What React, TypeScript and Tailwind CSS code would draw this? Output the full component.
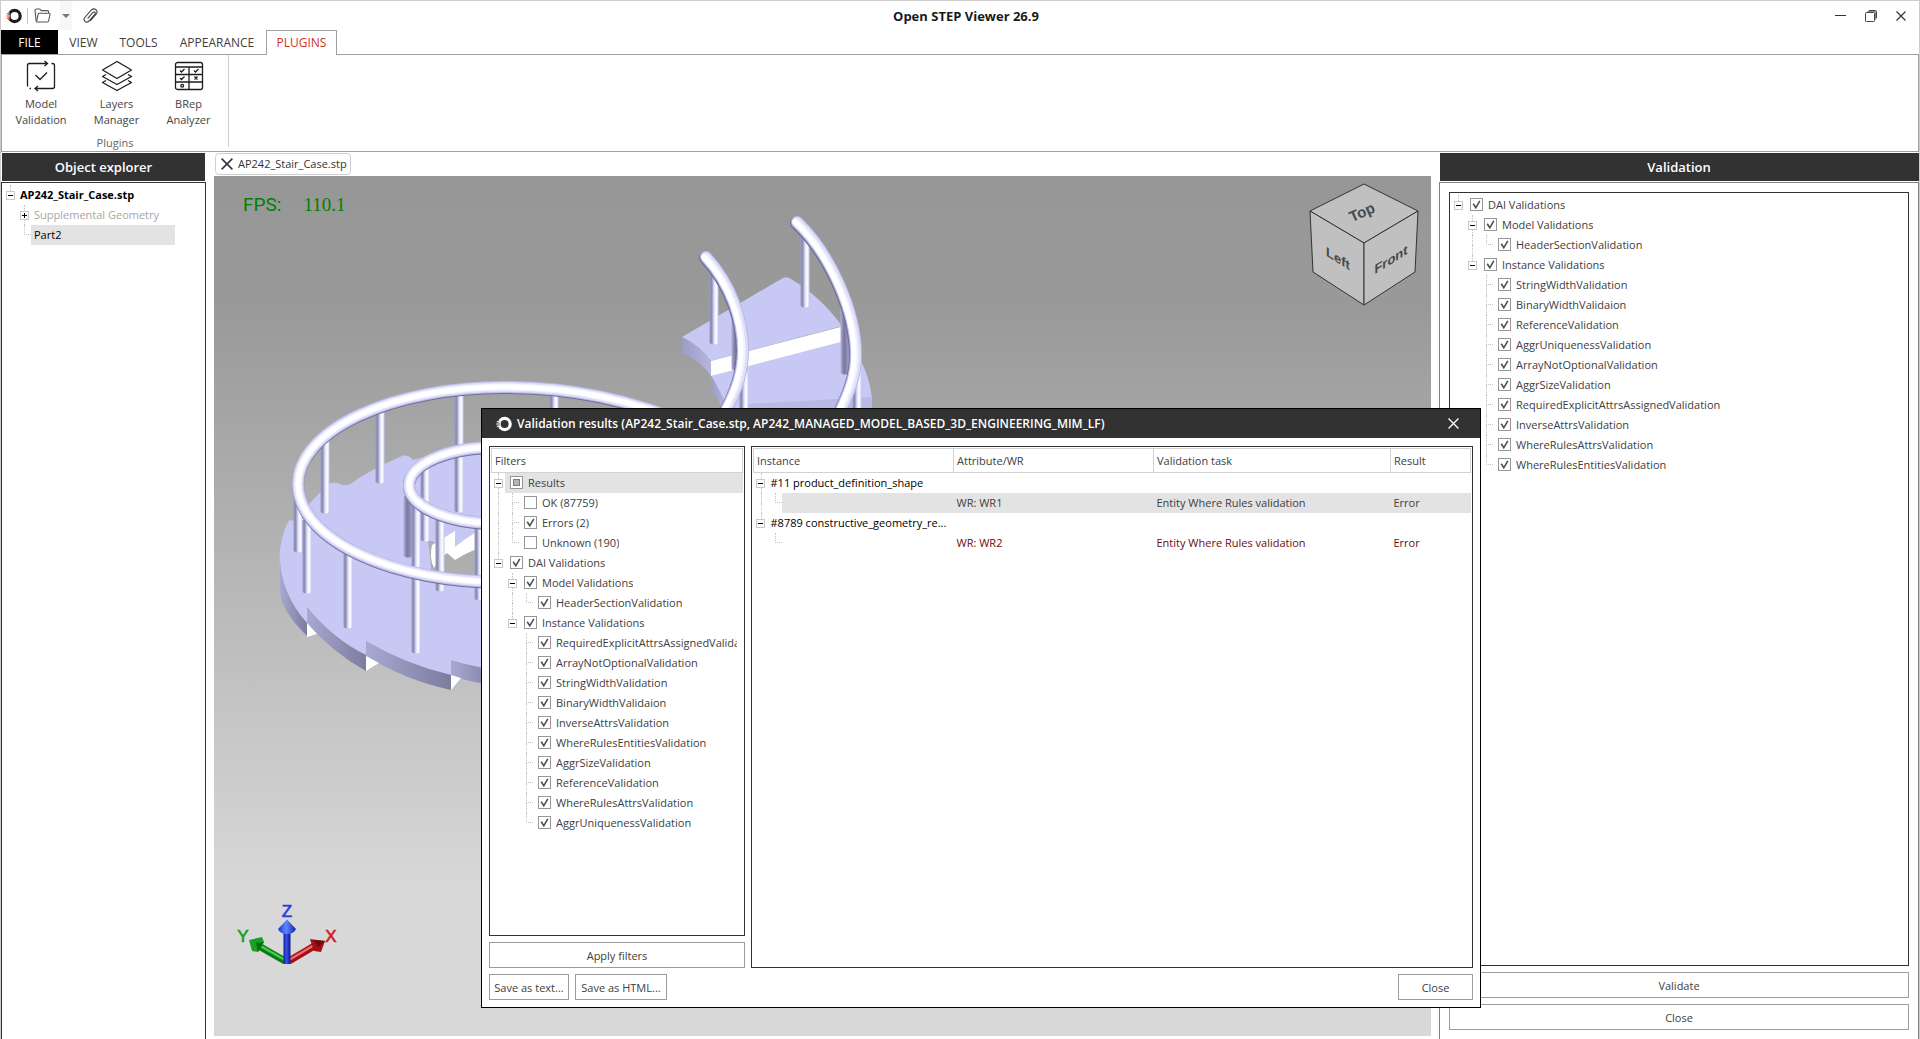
import React, { useId } from "react";

type Check = "on" | "off" | "mixed";
type Guide = "none" | "line" | "tee" | "end" | "both" | "up";

interface TreeNode {
  label: string;
  check?: Check;
  selected?: boolean;
  children?: TreeNode[];
}

const leaf = (label: string): TreeNode => ({ label, check: "on" });

const validationTree: TreeNode[] = [
  {
    label: "DAI Validations",
    check: "on",
    children: [
      { label: "Model Validations", check: "on", children: [leaf("HeaderSectionValidation")] },
      {
        label: "Instance Validations",
        check: "on",
        children: [
          "StringWidthValidation",
          "BinaryWidthValidaion",
          "ReferenceValidation",
          "AggrUniquenessValidation",
          "ArrayNotOptionalValidation",
          "AggrSizeValidation",
          "RequiredExplicitAttrsAssignedValidation",
          "InverseAttrsValidation",
          "WhereRulesAttrsValidation",
          "WhereRulesEntitiesValidation",
        ].map(leaf),
      },
    ],
  },
];

const filterTree: TreeNode[] = [
  {
    label: "Results",
    check: "mixed",
    selected: true,
    children: [
      { label: "OK (87759)", check: "off" },
      { label: "Errors (2)", check: "on" },
      { label: "Unknown (190)", check: "off" },
    ],
  },
  {
    label: "DAI Validations",
    check: "on",
    children: [
      { label: "Model Validations", check: "on", children: [leaf("HeaderSectionValidation")] },
      {
        label: "Instance Validations",
        check: "on",
        children: [
          "RequiredExplicitAttrsAssignedValidation",
          "ArrayNotOptionalValidation",
          "StringWidthValidation",
          "BinaryWidthValidaion",
          "InverseAttrsValidation",
          "WhereRulesEntitiesValidation",
          "AggrSizeValidation",
          "ReferenceValidation",
          "WhereRulesAttrsValidation",
          "AggrUniquenessValidation",
        ].map(leaf),
      },
    ],
  },
];

/* One 14px column of a tree row: dotted guide lines and, for parents, the expander. */
function GuideCell({ kind, expander }: { kind: Guide; expander?: "plus" | "minus" }) {
  const top = kind !== "none";
  const bottom = kind === "line" || kind === "tee" || kind === "both";
  const across = kind === "tee" || kind === "end";
  return (
    <span className="grid h-5 w-[14px] shrink-0 place-items-center">
      <span className="col-start-1 row-start-1 flex h-5 w-[14px] flex-col pl-[7px]">
        <span
          className={`h-[10px] border-dotted border-[#c4c4c4] ${top ? "border-l" : ""} ${across ? "border-b" : ""}`}
        />
        <span className={`h-[10px] border-dotted border-[#c4c4c4] ${bottom ? "border-l" : ""}`} />
      </span>
      {expander && (
        <button
          type="button"
          aria-label={expander === "plus" ? "Expand" : "Collapse"}
          className="col-start-1 row-start-1 grid size-[9px] place-items-center border border-[#c8c8c8] bg-white"
        >
          <span className="col-start-1 row-start-1 h-px w-[5px] bg-black" />
          {expander === "plus" && <span className="col-start-1 row-start-1 h-[5px] w-px bg-black" />}
        </button>
      )}
    </span>
  );
}

function CheckBox({ id, state }: { id: string; state: Check }) {
  return (
    <span className="mb-[2px] grid size-[13px] shrink-0">
      <input
        id={id}
        type="checkbox"
        defaultChecked={state === "on"}
        className="col-start-1 row-start-1 size-[13px] appearance-none border border-[#969696] bg-white"
      />
      {state === "on" && (
        <svg viewBox="0 0 13 13" className="pointer-events-none col-start-1 row-start-1 size-[13px]">
          <path d="M3.200 5.800 5.800 9.800 9.800 2.800" fill="none" stroke="#4f4f4f" strokeWidth="1.600" />
        </svg>
      )}
      {state === "mixed" && (
        <span className="pointer-events-none col-start-1 row-start-1 size-[7px] place-self-center border border-[#7d7d7d] bg-[#b4b4b4]" />
      )}
    </span>
  );
}

function CheckRow({ node, guides, kind }: { node: TreeNode; guides: Guide[]; kind: Guide }) {
  const id = useId();
  return (
    <div className="flex h-5 items-center">
      {guides.map((g, i) => (
        <GuideCell key={i} kind={g} />
      ))}
      <GuideCell kind={kind} expander={node.children ? "minus" : undefined} />
      <div
        className={`flex h-5 min-w-0 flex-1 items-center gap-[5px] pl-[5px] pr-[6px] ${node.selected ? "bg-[#e3e3e3]" : ""}`}
      >
        <CheckBox id={id} state={node.check ?? "off"} />
        <label htmlFor={id} className="overflow-hidden whitespace-nowrap">
          {node.label}
        </label>
      </div>
    </div>
  );
}

function CheckTree({ nodes, guides = [] }: { nodes: TreeNode[]; guides?: Guide[] }) {
  return (
    <>
      {nodes.map((node, i) => {
        const last = i === nodes.length - 1;
        const kind: Guide = node.children ? (last ? "up" : "both") : last ? "end" : "tee";
        return (
          <React.Fragment key={node.label}>
            <CheckRow node={node} guides={guides} kind={kind} />
            {node.children && (
              <CheckTree nodes={node.children} guides={[...guides, last ? "none" : "line"]} />
            )}
          </React.Fragment>
        );
      })}
    </>
  );
}

function Logo({ className, ring, gap, accent }: { className: string; ring: string; gap: string; accent: string }) {
  return (
    <svg viewBox="0 0 16 16" className={className} aria-hidden="true">
      <circle cx="8.600" cy="8" r="5.600" fill="none" stroke={ring} strokeWidth="3.200" />
      <path d="M0 5.700h3.600M0 8h3.600M0 10.300h3.600" stroke={gap} strokeWidth="1.800" />
      <path d="M.8 5.700h3.400M.2 8h4M.8 10.300h3.400" stroke={accent} strokeWidth="1" />
    </svg>
  );
}

function Cross({ className, width = 1.2 }: { className: string; width?: number }) {
  return (
    <svg viewBox="0 0 12 12" className={className} aria-hidden="true">
      <path d="M.6.6 11.4 11.4M11.4.6.6 11.4" stroke="currentColor" strokeWidth={width} fill="none" />
    </svg>
  );
}

function TitleBar() {
  return (
    <header className="flex h-[29px] items-center">
      <div className="flex w-[99px] items-center">
        <Logo className="ml-[5px] size-4" ring="#1d1d1f" gap="#ffffff" accent="#e0452f" />
        <span className="ml-[5px] h-4 w-px bg-[#c9c9c9]" />
        <button type="button" aria-label="Open" className="ml-[6px]">
          <svg viewBox="0 0 17 15" className="h-[15px] w-[17px]" fill="none" stroke="#555" strokeWidth="1.1">
            <path d="M2.2 13.4 1 2.6Q1 1 2.4 1h3.4l1.4 1.6h6.2q1.2 0 1.2 1.2v1.4" />
            <path d="M2.2 14h11.2q1 0 1.2-1L16 6.4q.2-1.2-1-1.2H5.4q-1 0-1.2 1L2.6 13q-.2 1-.4 1z" />
          </svg>
        </button>
        <button
          type="button"
          aria-label="Recent files"
          className="ml-[9px] grid h-[29px] w-3 place-items-center bg-[#f7f7f7]"
        >
          <svg viewBox="0 0 8 4" className="h-1 w-2">
            <path d="M0 0h8L4 4z" fill="#777" />
          </svg>
        </button>
        <button type="button" aria-label="Attach" className="ml-[11px]">
          <svg viewBox="0 0 15 16" className="h-4 w-[15px]" fill="none" stroke="#444" strokeWidth="1.1">
            <path d="M4.6 10.6 10 4.4q1.1-1.1 2 0 .8.9-.2 2L6 13q-1.900 2-4 .4-1.900-1.900-.2-3.900L8.400 2q2.200-2.100 4.500-.3 2.200 2 .4 4.300L7.200 13" />
          </svg>
        </button>
      </div>
      <h1 className="flex-1 text-center text-[13px] font-bold leading-4 text-[#1a1a1a]">Open STEP Viewer 26.9</h1>
      <div className="flex w-[87px] items-center justify-end gap-[19px] pr-[13px] text-[#333]">
        <button type="button" aria-label="Minimize" className="grid h-4 w-[11px] place-items-center">
          <span className="h-px w-[11px] bg-[#333]" />
        </button>
        <button type="button" aria-label="Restore">
          <svg viewBox="0 0 12 12" className="size-3" fill="none" stroke="#444">
            <path d="M2.500 2.500 4 .5h6.500q1 0 1 1V8l-2 1.500" />
            <path d="M2.500 1.500h8v8" stroke="#8a8a8a" />
            <rect x=".5" y="2.500" width="9" height="9" rx=".8" />
          </svg>
        </button>
        <button type="button" aria-label="Close window">
          <Cross className="size-[10px]" width={1.4} />
        </button>
      </div>
    </header>
  );
}

function Tabs() {
  const tab = "h-6 justify-center pt-px leading-6 text-[#404040]";
  return (
    <nav className="flex text-xs">
      <button type="button" className="h-6 w-[57px] bg-black pt-px leading-6 text-white">
        FILE
      </button>
      <button type="button" className={`${tab} w-[51px]`}>VIEW</button>
      <button type="button" className={`${tab} w-[59px]`}>TOOLS</button>
      <button type="button" className={`${tab} w-[98px]`}>APPEARANCE</button>
      <button
        type="button"
        className="relative z-10 -mb-px h-[25px] w-[71px] border border-b-0 border-[#a0a0a0] bg-white leading-6 text-[#d2321e]"
      >
        PLUGINS
      </button>
    </nav>
  );
}

function Ribbon() {
  const btn = "flex flex-col items-center text-center leading-4 text-[#444]";
  return (
    <section className="flex h-[98px] border border-[#a0a0a0]">
      <div className="flex w-[226px] flex-col">
        <div className="flex pt-[5px]">
          <button type="button" className={`${btn} w-[78px]`}>
            <svg viewBox="0 0 30 32" className="mb-1 h-8 w-[30px]" fill="none" stroke="#1e1e1e" strokeWidth="1.300">
              <path d="M1.500 26.500V5.500q0-2 2-2H21M18.500 1l3 2.500-3 2.500M25.500 3.500h1q2 0 2 2v21q0 2-2 2H9.500M12 26l-3 2.500 3 2.500M5 28.500H3.500" />
              <path d="m9.500 15 4.500 4.500 7-7" />
            </svg>
            Model
            <br />
            Validation
          </button>
          <button type="button" className={`${btn} w-[73px]`}>
            <svg
              viewBox="0 0 32 32"
              className="mb-1 size-8"
              fill="none"
              stroke="#1e1e1e"
              strokeWidth="1.300"
              strokeLinejoin="round"
            >
              <path d="M16 1.500 30.500 10 16 18.500 1.500 10z" />
              <path d="M5 14.500 1.500 16.500 16 24.500l14.500-8-3.500-2" />
              <path d="M5 20.500 1.500 22.500 16 30.500l14.500-8-3.500-2" />
            </svg>
            Layers
            <br />
            Manager
          </button>
          <button type="button" className={`${btn} w-[71px]`}>
            <svg viewBox="0 0 30 32" className="mb-1 h-8 w-[30px]" fill="none" stroke="#1e1e1e" strokeWidth="1.300">
              <rect x="1.500" y="2.500" width="27" height="27" rx="2" />
              <path d="M1.500 7h27M1.500 14.500h27M1.500 22h27M15 7v22.500" />
              <path d="m6 10.500 1.500 1.500L10.500 9M20 10.500l1.500 1.500L24.500 9M6 18l1.500 1.500 3-3M20.500 16.500l3 3m0-3-3 3" />
              <circle cx="8.200" cy="25.700" r="1.400" />
            </svg>
            BRep
            <br />
            Analyzer
          </button>
        </div>
        <div className="mt-[7px] text-center leading-4 text-[#666]">Plugins</div>
      </div>
      <div className="mb-1 w-px bg-[#cfcfcf]" />
    </section>
  );
}

function ObjectExplorer() {
  return (
    <aside className="flex w-[205px] shrink-0 flex-col gap-px">
      <h2 className="mx-px h-7 bg-[#323232] text-center text-[13px] font-semibold leading-7 text-white">
        Object explorer
      </h2>
      <div className="flex-1 border border-b-0 border-[#323232] pl-px pt-[2px]">
        <div className="flex h-5 items-center">
          <GuideCell kind="up" expander="minus" />
          <span className="pl-[3px] font-bold text-black">AP242_Stair_Case.stp</span>
        </div>
        <div className="flex h-5 items-center">
          <GuideCell kind="none" />
          <GuideCell kind="both" expander="plus" />
          <span className="pl-[3px] text-[#a6a6a6]">Supplemental Geometry</span>
        </div>
        <div className="flex h-5 items-center">
          <GuideCell kind="none" />
          <GuideCell kind="end" />
          <span className="h-5 w-[144px] bg-[#e3e3e3] pl-[3px] leading-5 text-black">Part2</span>
        </div>
      </div>
    </aside>
  );
}

function Post({ x, top, bottom, dark }: { x: number; top: number; bottom: number; dark?: boolean }) {
  return (
    <path
      d={`M${x - 4.5} ${top}V${bottom - 1}Q${x} ${bottom + 2} ${x + 4.5} ${bottom - 1}V${top}z`}
      fill={dark ? "url(#postDark)" : "url(#post)"}
    />
  );
}

function Rail({ d, steep }: { d: string; steep?: boolean }) {
  return (
    <g fill="none" strokeLinecap="round">
      <path d={d} stroke="#6f6f96" strokeWidth="12" transform={steep ? "translate(-1 1)" : "translate(0 1)"} />
      <path d={d} stroke="#b9b9e6" strokeWidth="12" />
      <path d={d} stroke="#dedefa" strokeWidth="10" />
      <path d={d} stroke="#f1f1ff" strokeWidth="7" transform={steep ? "translate(-1 0)" : undefined} />
      <path d={d} stroke="#ffffff" strokeWidth="5" transform={steep ? "translate(-2 0)" : undefined} />
    </g>
  );
}

function StairModel() {
  return (
    <svg viewBox="214 176 720 560" className="h-[560px] w-[720px]" role="img" aria-label="Spiral stair model">
      <defs>
        <linearGradient id="post">
          <stop offset="0" stopColor="#9a9ac4" />
          <stop offset=".25" stopColor="#8a8ab2" />
          <stop offset=".5" stopColor="#dedefa" />
          <stop offset=".75" stopColor="#ffffff" />
          <stop offset="1" stopColor="#c8c8f2" />
        </linearGradient>
        <linearGradient id="postDark">
          <stop offset="0" stopColor="#b0b0da" />
          <stop offset=".4" stopColor="#77779e" />
          <stop offset="1" stopColor="#a3a3cd" />
        </linearGradient>
        <linearGradient id="riser">
          <stop offset="0" stopColor="#a8a8d2" />
          <stop offset="1" stopColor="#7c7c9f" />
        </linearGradient>
        <linearGradient id="riserLeft">
          <stop offset="0" stopColor="#9c9cc4" />
          <stop offset="1" stopColor="#b6b6de" />
        </linearGradient>
      </defs>

      {/* lower flight */}
      <path
        d="M289 520 293 521Q302 512 310 503L328 484Q334 481 340 484 346 487 352 483 368 471 400 457 407 453 413 460L440 452 500 448V670L481 667Q466 665 451 660V675Q405 664 366 641V655Q333 639 307 607V623Q290 604 281 575 276 545 289 520z"
        fill="#c8c8f5"
      />
      <path d="M280 560Q282 596 307 623V636Q282 612 280 592z" fill="url(#riser)" />
      <path d="M307 607Q333 639 366 655V671Q333 653 307 623z" fill="url(#riser)" />
      <path d="M366 641Q405 664 451 675V690Q405 680 366 656z" fill="url(#riser)" />
      <path d="M451 660Q466 665 500 671V686Q466 682 451 675z" fill="url(#riser)" />
      <path d="M307 623 317 634 307 637zM366 656 379 663 366 671zM451 675 461 678 451 690z" fill="#fff" />
      <path d="M432 541 428 541Q431 562 431 570L460 578 500 580V536L455 552z" fill="#aeaeae" />
      <path d="M432 545 455 531V560L447 553Q440 558 434 568 429 558 432 545z" fill="#fff" />
      <path d="M455 531 477 530 455 547z" fill="#c8c8f5" />
      <path d="M455 547Q466 538 478 531L490 545Q470 550 455 560z" fill="#fff" />

      <Post x={459} top={394} bottom={512} />
      <Post x={554} top={392} bottom={420} />
      <Post x={380} top={408} bottom={483} />
      <Post x={325} top={436} bottom={513} />
      <Post x={298} top={500} bottom={552} />
      <Post x={425} top={464} bottom={541} />
      <Post x={408} top={496} bottom={557} dark />
      <Post x={440} top={516} bottom={591} />
      <Post x={479} top={522} bottom={600} />
      <Post x={307} top={520} bottom={593} />
      <Post x={348} top={552} bottom={628} />
      <Post x={416} top={502} bottom={653} />
      <Rail d="M495 447A86 38 0 0 0 409 485 86 38 0 0 0 495 523" />
      <Rail d="M700 429C630 398 570 387 503 387A205 97 0 0 0 298 484 205 98 0 0 0 503 582" />

      {/* upper flight */}
      <path d="M711 376 848 338 850 345Q868 366 872 398V420H730Q722 394 711 376z" fill="#c8c8f5" />
      <path d="M748 404 872 397V420H740z" fill="#b9b9e6" />
      <path d="M711 376Q722 392 728 412L722 408Q718 398 711 392z" fill="url(#riserLeft)" />
      <path d="M682 337 783 278Q787 276 791 279 820 296 842 326L711 361Q700 346 682 337z" fill="#c8c8f5" />
      <path d="M682 337Q700 346 711 361V376Q700 360 682 353z" fill="url(#riserLeft)" />
      <path d="M711 361 848 325V340L711 376z" fill="#fff" />
      <Post x={714} top={268} bottom={344} />
      <Post x={805} top={232} bottom={307} />
      <Post x={736} top={316} bottom={370} dark />
      <Post x={845} top={306} bottom={374} dark />
      <Post x={744} top={372} bottom={420} />
      <Post x={857} top={370} bottom={420} />
      <Rail steep d="M706 257C731 284 743 320 743 350 743 371 738 388 724 414" />
      <Rail steep d="M797 222C829 252 856 310 856 355 856 375 850 391 839 414" />
    </svg>
  );
}

function ViewCube() {
  return (
    <svg viewBox="1308 182 112 125" className="h-[125px] w-28" role="img" aria-label="View cube">
      <g fill="#c0c0c0" stroke="#333" strokeLinejoin="round">
        <path d="M1364 184 1418 211 1364 243 1310 211z" />
        <path d="M1310 211 1364 243V305L1313 272z" />
        <path d="M1418 211 1364 243V305L1415 272z" />
      </g>
      <g fill="#484848" fontFamily="Liberation Sans, sans-serif" fontWeight="bold" textAnchor="middle">
        <text fontSize="15" transform="translate(1364 217) rotate(-24)">Top</text>
        <text fontSize="13" transform="translate(1338 263) skewY(32)">Left</text>
        <text fontSize="13" transform="translate(1391 264) skewY(-32)">Front</text>
      </g>
    </svg>
  );
}

function AxisTriad() {
  return (
    <svg viewBox="234 902 108 66" className="h-[66px] w-[108px]" role="img" aria-label="Axes">
      <defs>
        <linearGradient id="zShaft">
          <stop offset="0" stopColor="#0a1a9c" />
          <stop offset=".4" stopColor="#3a52e8" />
          <stop offset="1" stopColor="#0a1690" />
        </linearGradient>
        <linearGradient id="zCone">
          <stop offset="0" stopColor="#1635d8" />
          <stop offset=".45" stopColor="#5d86ff" />
          <stop offset="1" stopColor="#0f24b0" />
        </linearGradient>
      </defs>
      <path d="M285 962 257 946" stroke="#0c7a16" strokeWidth="7" />
      <path d="M285 961 257 945" stroke="#3fd04a" strokeWidth="2.500" />
      <path d="M289 962 316 946" stroke="#a30f14" strokeWidth="7" />
      <path d="M289 961 316 945" stroke="#f06a6a" strokeWidth="2.500" />
      <path d="M249 941 262 938 264 943 258 953 252 952z" fill="#17a024" />
      <path d="M256 944 264 943 258 953z" fill="#0b6c14" />
      <path d="M310 940 325 942 321 953 314 952z" fill="#a01014" />
      <path d="M314 941 325 942 318 948z" fill="#6d0a0d" />
      <path d="M283.500 932h7v33h-7z" fill="url(#zShaft)" />
      <path d="M287 920.500 296 930Q294 935 287 935 280 935 278 930z" fill="url(#zCone)" />
      <g fontFamily="Liberation Sans, sans-serif" fontSize="17" textAnchor="middle" strokeWidth=".6">
        <text x="287" y="918" fill="#2340dc" stroke="#2340dc">Z</text>
        <text x="243" y="943" fill="#14a01e" stroke="#14a01e">Y</text>
        <text x="331" y="943" fill="#d01c20" stroke="#d01c20">X</text>
      </g>
    </svg>
  );
}

function Viewport() {
  return (
    <main className="flex min-w-0 flex-1 flex-col pb-[3px]">
      <div className="flex h-[23px] items-start pl-px">
        <div className="flex h-[22px] items-center gap-[5px] rounded-sm border border-[#cfcfcf] pl-[5px] pr-[3px] text-[#333]">
          <button type="button" aria-label="Close document">
            <Cross className="size-3" width={1.5} />
          </button>
          <span className="leading-4">AP242_Stair_Case.stp</span>
        </div>
      </div>
      <div className="relative flex-1 overflow-hidden bg-[linear-gradient(#979797,#999999_15%,#d8d8d8_83%,#d8d8d8)]">
        <div className="absolute left-0 top-0">
          <StairModel />
        </div>
        <div className="absolute left-[29px] top-[19px] flex gap-[22px] text-[19px] leading-5 text-[#008000]">
          <span className="font-['Roboto',sans-serif]">FPS:</span>
          <span className="font-['Liberation_Serif',serif]">110.1</span>
        </div>
        <div className="absolute right-[11px] top-[6px]">
          <ViewCube />
        </div>
        <div className="absolute bottom-[69px] left-5">
          <AxisTriad />
        </div>
      </div>
    </main>
  );
}

const wideButton = "h-[26px] w-full border border-[#9c9c9c] bg-white pt-px leading-6 text-[#404040]";

function ValidationPanel() {
  return (
    <aside className="flex w-[480px] shrink-0 flex-col gap-px">
      <h2 className="ml-px h-7 bg-[#323232] pr-px text-center text-[13px] font-semibold leading-7 text-white">
        Validation
      </h2>
      <div className="flex flex-1 flex-col gap-[6px] border border-b-0 border-[#808080] px-[9px] pb-[9px] pt-[9px]">
        <div className="flex-1 border border-[#323232] pl-px pt-[2px]">
          <CheckTree nodes={validationTree} />
        </div>
        <button type="button" className={wideButton}>Validate</button>
        <button type="button" className={wideButton}>Close</button>
      </div>
    </aside>
  );
}

function ResultsTable() {
  const th = "h-6 border border-[#d2d2d2] pl-[3px] text-left font-normal";
  const cell = "pl-[3px]";
  return (
    <table className="w-full table-fixed border-collapse">
      <colgroup>
        <col className="w-[200px]" />
        <col className="w-[200px]" />
        <col />
        <col className="w-20" />
      </colgroup>
      <thead>
        <tr>
          <th className={th}>Instance</th>
          <th className={th}>Attribute/WR</th>
          <th className={th}>Validation task</th>
          <th className={th}>Result</th>
        </tr>
      </thead>
      <tbody>
        <tr className="h-5 text-black">
          <td className="p-0" colSpan={4}>
            <span className="flex h-5 items-center">
              <GuideCell kind="both" expander="minus" />
              <span className="pl-[3px]">#11 product_definition_shape</span>
            </span>
          </td>
        </tr>
        <tr className="h-5">
          <td className="p-0">
            <span className="flex h-5">
              <GuideCell kind="line" />
              <GuideCell kind="end" />
              <span className="flex-1 bg-[#e3e3e3]" />
            </span>
          </td>
          <td className={`${cell} bg-[#e3e3e3]`}>WR: WR1</td>
          <td className={`${cell} bg-[#e3e3e3]`}>Entity Where Rules validation</td>
          <td className={`${cell} bg-[#e3e3e3]`}>Error</td>
        </tr>
        <tr className="h-5 text-black">
          <td className="p-0" colSpan={4}>
            <span className="flex h-5 items-center">
              <GuideCell kind="up" expander="minus" />
              <span className="whitespace-nowrap pl-[3px]">#8789 constructive_geometry_re...</span>
            </span>
          </td>
        </tr>
        <tr className="h-5 text-[#6e0a10]">
          <td className="p-0">
            <span className="flex h-5">
              <GuideCell kind="none" />
              <GuideCell kind="end" />
            </span>
          </td>
          <td className={cell}>WR: WR2</td>
          <td className={cell}>Entity Where Rules validation</td>
          <td className={cell}>Error</td>
        </tr>
      </tbody>
    </table>
  );
}

function ResultsDialog() {
  const small = "h-[26px] border border-[#9c9c9c] bg-white pt-px leading-6";
  return (
    <div
      role="dialog"
      aria-labelledby="dialog-title"
      className="absolute left-[480px] top-[407px] z-20 flex h-[600px] w-[1000px] flex-col border border-black bg-white"
    >
      <div className="flex h-[29px] items-center bg-[#323232] pl-[14px] pr-[21px] text-white">
        <Logo className="size-4" ring="#ffffff" gap="#323232" accent="#ffffff" />
        <h2 id="dialog-title" className="ml-[5px] flex-1 text-xs font-semibold leading-4">
          Validation results (AP242_Stair_Case.stp, AP242_MANAGED_MODEL_BASED_3D_ENGINEERING_MIM_LF)
        </h2>
        <button type="button" aria-label="Close dialog">
          <Cross className="size-[11px]" width={1.4} />
        </button>
      </div>
      <div className="flex min-h-0 flex-1 flex-col gap-[6px] px-[7px] pb-[7px] pt-2">
        <div className="flex min-h-0 flex-1 gap-[6px]">
          <div className="flex w-64 flex-col gap-[6px]">
            <div className="min-h-0 flex-1 border border-[#323232] p-px">
              <div className="h-[25px] border border-[#d2d2d2] pl-[3px] leading-[23px]">Filters</div>
              <div className="overflow-hidden">
                <CheckTree nodes={filterTree} />
              </div>
            </div>
            <button type="button" className={wideButton}>Apply filters</button>
          </div>
          <div className="min-w-0 flex-1 border border-[#323232] p-px">
            <ResultsTable />
          </div>
        </div>
        <div className="flex gap-[6px]">
          <button type="button" className={`${small} w-20`}>Save as text...</button>
          <button type="button" className={`${small} w-[92px]`}>Save as HTML...</button>
          <button type="button" className={`${small} ml-auto w-[75px]`}>Close</button>
        </div>
      </div>
    </div>
  );
}

export default function App() {
  return (
    <div className="relative flex h-screen min-h-[720px] w-full flex-col overflow-hidden border-x border-t border-[#cccccc] bg-white font-['Open_Sans','Noto_Sans',sans-serif] text-[11px] leading-4 text-[#404040]">
      <div className="absolute -top-px left-[839px] flex h-px">
        <span className="w-12 bg-[#2c6a9e]" />
        <span className="w-[193px] bg-[#e2e2e2]" />
      </div>
      <TitleBar />
      <Tabs />
      <Ribbon />
      <div className="mt-px flex min-h-0 flex-1">
        <ObjectExplorer />
        <div className="flex min-w-0 flex-1 pl-2 pr-2">
          <Viewport />
        </div>
        <ValidationPanel />
      </div>
      <ResultsDialog />
    </div>
  );
}
